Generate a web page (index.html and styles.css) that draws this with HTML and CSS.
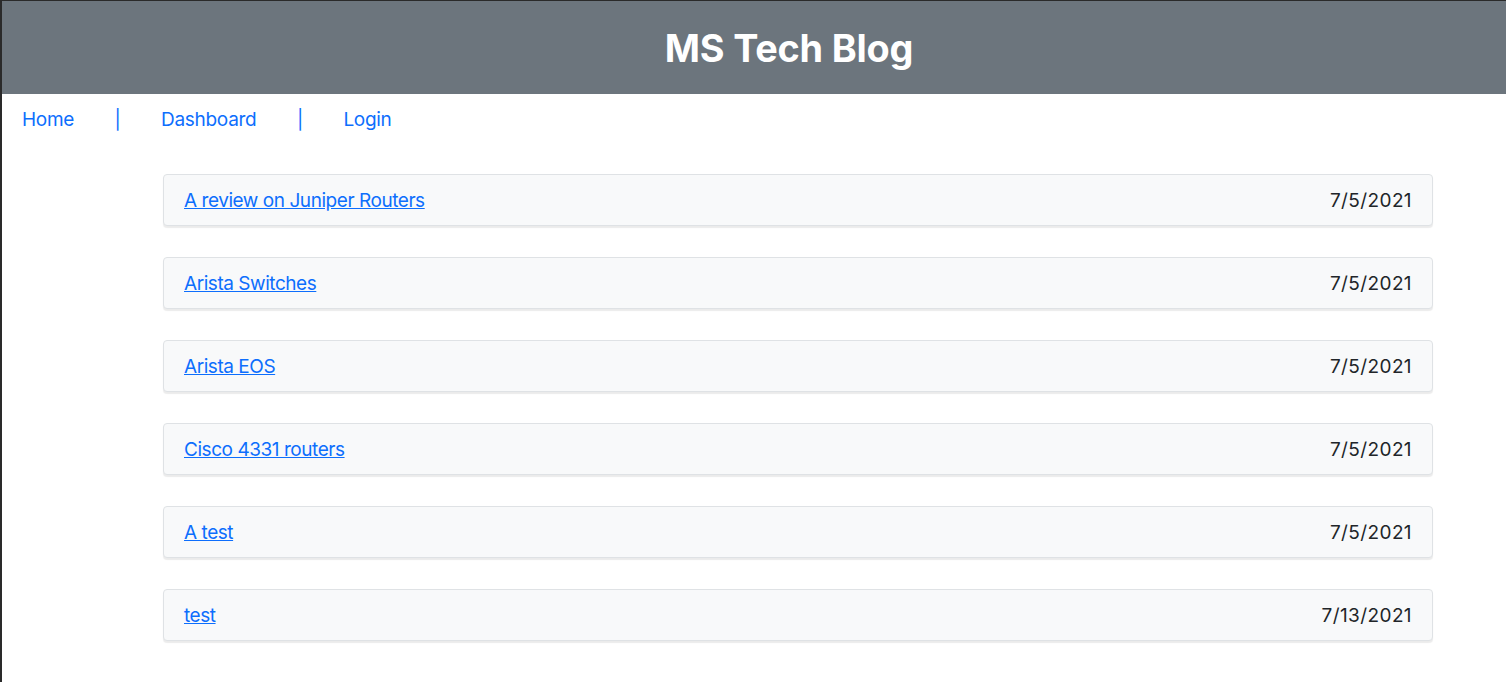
FILE: index.html
```html
<!DOCTYPE html>
<html lang="en">
<head>
<meta charset="utf-8">
<title>MS Tech Blog</title>
<link rel="stylesheet" href="styles.css">
</head>
<body>
<div class="frame">
  <header class="masthead">
    <h1 class="site-title">MS Tech Blog</h1>
  </header>
  <nav class="topnav">
    <a href="#" class="nav-link">Home</a>
    <span class="sep">|</span>
    <a href="#" class="nav-link">Dashboard</a>
    <span class="sep">|</span>
    <a href="#" class="nav-link">Login</a>
  </nav>
  <main class="posts">
    <div class="post-card"><a href="#" class="post-title">A review on Juniper Routers</a><span class="post-date">7/5/2021</span></div>
    <div class="post-card"><a href="#" class="post-title">Arista Switches</a><span class="post-date">7/5/2021</span></div>
    <div class="post-card"><a href="#" class="post-title">Arista EOS</a><span class="post-date">7/5/2021</span></div>
    <div class="post-card"><a href="#" class="post-title">Cisco 4331 routers</a><span class="post-date">7/5/2021</span></div>
    <div class="post-card"><a href="#" class="post-title">A test</a><span class="post-date">7/5/2021</span></div>
    <div class="post-card"><a href="#" class="post-title">test</a><span class="post-date">7/13/2021</span></div>
  </main>
</div>
</body>
</html>
```
FILE: styles.css
```css
html, body {
  margin: 0;
  padding: 0;
  height: 100%;
}
body {
  font-family: Inter, "Liberation Sans", Arial, sans-serif;
  font-size: 19px;
  color: #212529;
  background: #2a2a2a;
  padding: 1px 0 0 2px;
  box-sizing: border-box;
  overflow: hidden;
}
.frame {
  background: #fff;
  height: 100%;
}
.masthead {
  background: #6c757d;
  height: 93px;
  display: flex;
  align-items: center;
  justify-content: center;
  padding-left: 70px;
}
.site-title {
  margin: 0;
  color: #fff;
  font-size: 37.8px;
  font-weight: 700;
  letter-spacing: -0.2px;
}
.topnav {
  display: flex;
  align-items: center;
  gap: 40.5px;
  padding: 11px 0 0 20px;
  height: 29px;
}
.nav-link, .sep {
  color: #0d6efd;
  text-decoration: none;
  letter-spacing: -0.3px;
}
.posts {
  display: flex;
  flex-direction: column;
  gap: 31px;
  margin: 40px 0 0 161px;
  width: 1270px;
}
.post-card {
  display: flex;
  justify-content: space-between;
  align-items: center;
  height: 52px;
  box-sizing: border-box;
  padding: 0 20px;
  background: #f8f9fa;
  border: 1px solid #dfe2e5;
  border-radius: 4px;
  box-shadow: 0 2px 1px rgba(0, 0, 0, 0.08);
}
.post-title {
  color: #0d6efd;
  text-decoration: underline;
  letter-spacing: -0.45px;
}
.post-date {
  color: #212529;
  letter-spacing: 0.4px;
}
```
